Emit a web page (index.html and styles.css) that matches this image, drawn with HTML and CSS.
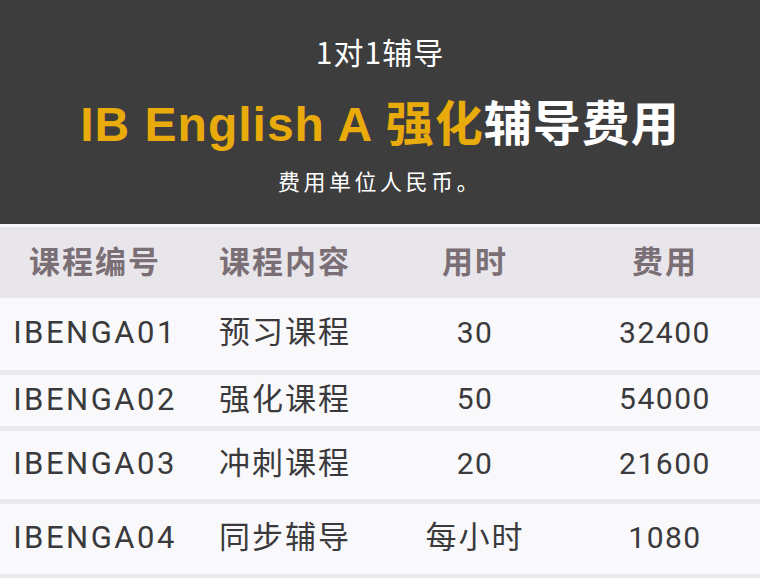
FILE: index.html
```html
<!DOCTYPE html>
<html lang="zh">
<head>
<meta charset="utf-8">
<link rel="stylesheet" href="styles.css">
</head>
<body>
<div class="page">
  <header class="hero">
    <div class="kicker">1对1辅导</div>
    <h1 class="title"><span class="gold">IB English A 强化</span>辅导费用</h1>
    <div class="note">费用单位人民币。</div>
  </header>
  <div class="table">
    <div class="row head">
      <div class="cell zh">课程编号</div>
      <div class="cell zh">课程内容</div>
      <div class="cell zh">用时</div>
      <div class="cell zh">费用</div>
    </div>
    <div class="row r1">
      <div class="cell code">IBENGA01</div>
      <div class="cell zh">预习课程</div>
      <div class="cell">30</div>
      <div class="cell">32400</div>
    </div>
    <div class="row r2">
      <div class="cell code">IBENGA02</div>
      <div class="cell zh">强化课程</div>
      <div class="cell">50</div>
      <div class="cell">54000</div>
    </div>
    <div class="row r3">
      <div class="cell code">IBENGA03</div>
      <div class="cell zh">冲刺课程</div>
      <div class="cell">20</div>
      <div class="cell">21600</div>
    </div>
    <div class="row r4">
      <div class="cell code">IBENGA04</div>
      <div class="cell zh">同步辅导</div>
      <div class="cell zh">每小时</div>
      <div class="cell">1080</div>
    </div>
  </div>
</div>
</body>
</html>
```

FILE: styles.css
```css
* { box-sizing: border-box; margin: 0; padding: 0; }
html, body { background: #ebe8ee; }
body {
  width: 760px;
  height: 578px;
  overflow: hidden;
  font-family: Roboto, "Noto Sans CJK SC", sans-serif;
}
.page { display: flex; flex-direction: column; }
.hero {
  height: 224px;
  background: #3d3d3d;
  display: flex;
  flex-direction: column;
  align-items: center;
  color: #ffffff;
}
.kicker {
  margin-top: 33px;
  font-size: 30px;
  line-height: 36px;
  letter-spacing: 1px;
  font-family: "Noto Sans CJK SC", sans-serif;
}
.title {
  margin-top: 28px;
  font-size: 48px;
  line-height: 56px;
  font-weight: bold;
  letter-spacing: 1px;
  font-family: "Liberation Sans", "Noto Sans CJK SC", sans-serif;
}
.gold { color: #e9aa0b; }
.note {
  margin-top: 13px;
  font-size: 22px;
  line-height: 28px;
  letter-spacing: 3.5px;
  font-family: "Noto Sans CJK SC", sans-serif;
}
.table {
  display: flex;
  flex-direction: column;
  gap: 5px;
  padding-top: 3px;
  background: linear-gradient(#f7f6f9 0 3px, #ebe8ee 3px);
}
.table .head { margin-bottom: -5px; }
.row {
  display: grid;
  grid-template-columns: repeat(4, 1fr);
  align-items: center;
  background: #f9f8fb;
  color: #3a3a3c;
  font-size: 30px;
  letter-spacing: 1.5px;
  padding-bottom: 3px;
}
.row.head {
  height: 71px;
  padding-bottom: 7px;
  background: #e9e6eb;
  color: #7b6f76;
  font-weight: bold;
}
.r1 { height: 72px; }
.r2 { height: 51px; }
.r3 { height: 68px; }
.r4 { height: 70px; }
.cell {
  text-align: center;
  white-space: nowrap;
  line-height: 1;
}
.cell.zh {
  font-family: "Noto Sans CJK SC", sans-serif;
  font-size: 31px;
  letter-spacing: 2px;
}
.row:not(.head) .cell.zh { padding-bottom: 6px; }
.cell.code { letter-spacing: 2.5px; font-size: 31px; }
```
